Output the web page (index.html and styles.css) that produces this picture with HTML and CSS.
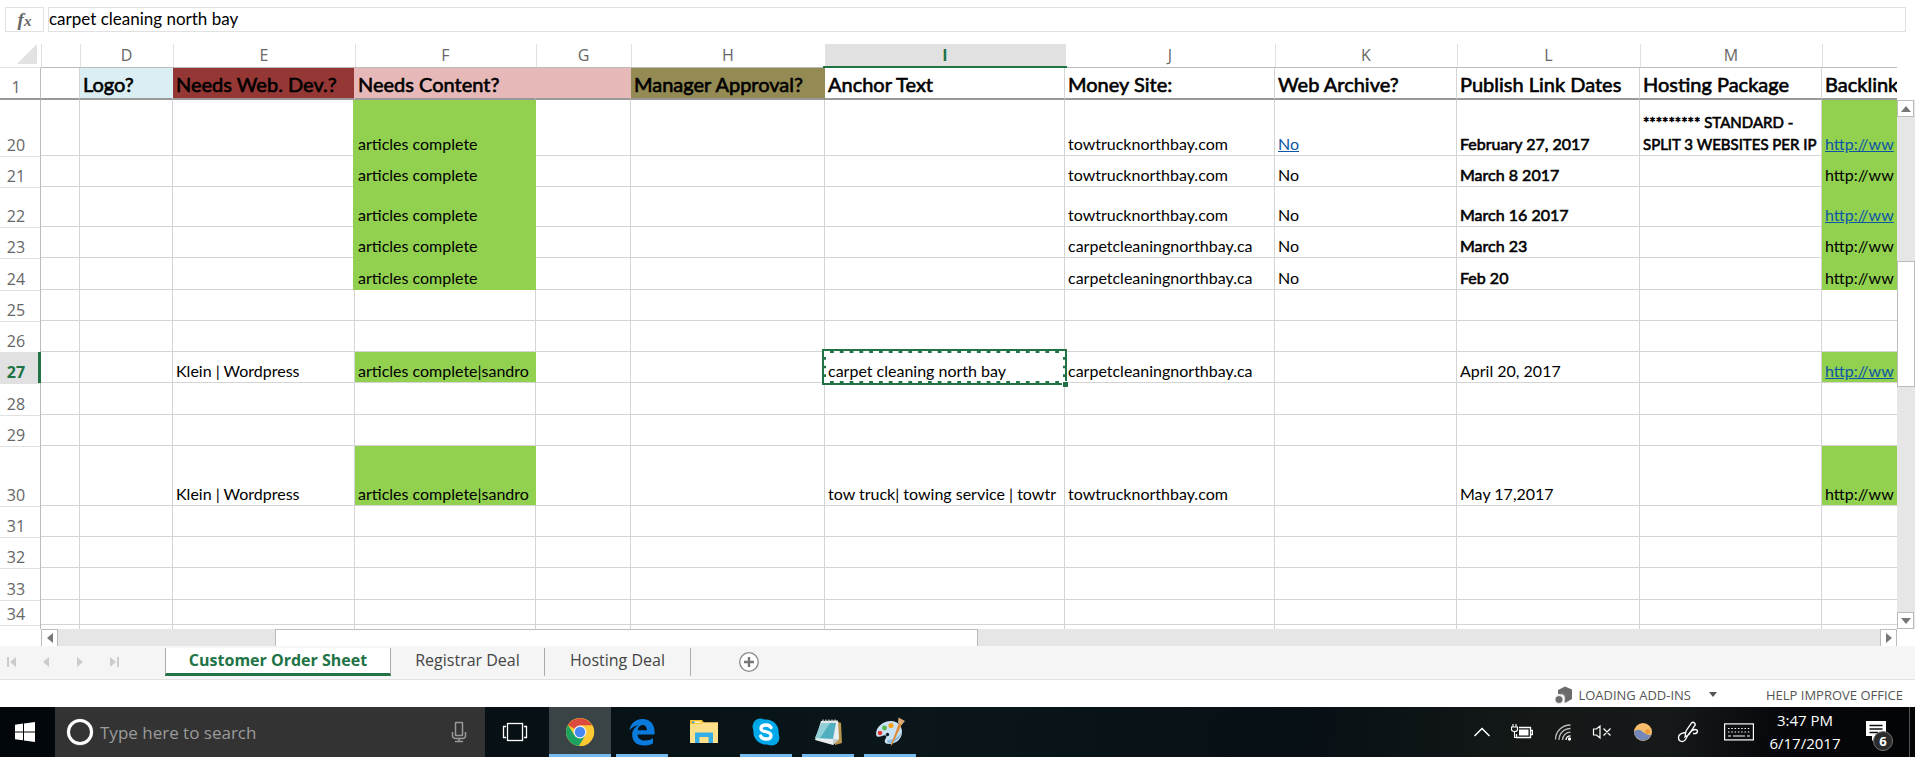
FILE: index.html
```html
<!DOCTYPE html>
<html lang="en">
<head>
<meta charset="utf-8">
<title>Customer Order Sheet</title>
<link rel="stylesheet" href="styles.css">
</head>
<body>
<div class="formula-bar">
  <button class="fx" aria-label="Insert function"><i>f</i><i class="fx-x">x</i></button>
  <input class="formula" type="text" aria-label="Formula" value="carpet cleaning north bay">
</div>

<main class="sheet">
  <div class="grid-view">
    <table class="grid">
      <colgroup>
        <col class="w-num"><col class="w-c"><col class="w-d"><col class="w-e"><col class="w-f"><col class="w-g"><col class="w-h"><col class="w-i"><col class="w-j"><col class="w-k"><col class="w-l"><col class="w-m"><col>
      </colgroup>
      <thead>
        <tr class="letters"><th class="corner"><svg width="20" height="20" viewBox="0 0 20 20"><path d="M20 0V20H0Z" fill="#e1e1e1"/></svg></th><th></th><th>D</th><th>E</th><th>F</th><th>G</th><th>H</th><th class="current">I</th><th>J</th><th>K</th><th>L</th><th>M</th><th></th></tr>
        <tr class="titles"><th class="num">1</th><td></td><td class="t-blue">Logo?</td><td class="t-red">Needs Web. Dev.?</td><td class="t-pink">Needs Content?</td><td class="t-pink"></td><td class="t-olive">Manager Approval?</td><td>Anchor Text</td><td>Money Site:</td><td>Web Archive?</td><td>Publish Link Dates</td><td>Hosting Package</td><td>Backlink</td></tr>
      </thead>
      <tbody>
        <tr class="r56"><th>20</th><td></td><td></td><td></td><td class="green solid wide">articles complete</td><td></td><td></td><td></td><td>towtrucknorthbay.com</td><td><a href="#">No</a></td><td class="bold">February 27, 2017</td><td class="bold wrap">********* STANDARD - SPLIT 3 WEBSITES PER IP</td><td class="green solid"><a href="#">http://ww</a></td></tr>
        <tr class="r31"><th>21</th><td></td><td></td><td></td><td class="green solid wide">articles complete</td><td></td><td></td><td></td><td>towtrucknorthbay.com</td><td>No</td><td class="bold">March 8 2017</td><td></td><td class="green solid">http://ww</td></tr>
        <tr class="r40"><th>22</th><td></td><td></td><td></td><td class="green solid wide">articles complete</td><td></td><td></td><td></td><td>towtrucknorthbay.com</td><td>No</td><td class="bold">March 16 2017</td><td></td><td class="green solid"><a href="#">http://ww</a></td></tr>
        <tr class="r31"><th>23</th><td></td><td></td><td></td><td class="green solid wide">articles complete</td><td></td><td></td><td></td><td>carpetcleaningnorthbay.ca</td><td>No</td><td class="bold">March 23</td><td></td><td class="green solid">http://ww</td></tr>
        <tr class="r32"><th>24</th><td></td><td></td><td></td><td class="green solid wide">articles complete</td><td></td><td></td><td></td><td>carpetcleaningnorthbay.ca</td><td>No</td><td class="bold">Feb 20</td><td></td><td class="green solid">http://ww</td></tr>
        <tr class="r31"><th>25</th><td></td><td></td><td></td><td></td><td></td><td></td><td></td><td></td><td></td><td></td><td></td><td></td></tr>
        <tr class="r31"><th>26</th><td></td><td></td><td></td><td></td><td></td><td></td><td></td><td></td><td></td><td></td><td></td><td></td></tr>
        <tr class="r31"><th class="current">27</th><td></td><td></td><td>Klein | Wordpress</td><td class="green">articles complete|sandro</td><td></td><td></td><td class="selected">carpet cleaning north bay<span class="marquee"></span><span class="handle"></span></td><td>carpetcleaningnorthbay.ca</td><td></td><td>April 20, 2017</td><td></td><td class="green"><a href="#">http://ww</a></td></tr>
        <tr class="r32"><th>28</th><td></td><td></td><td></td><td></td><td></td><td></td><td></td><td></td><td></td><td></td><td></td><td></td></tr>
        <tr class="r31"><th>29</th><td></td><td></td><td></td><td></td><td></td><td></td><td></td><td></td><td></td><td></td><td></td><td></td></tr>
        <tr class="r60"><th>30</th><td></td><td></td><td>Klein | Wordpress</td><td class="green">articles complete|sandro</td><td></td><td></td><td>tow truck| towing service | towtr</td><td>towtrucknorthbay.com</td><td></td><td>May 17,2017</td><td></td><td class="green">http://ww</td></tr>
        <tr class="r31"><th>31</th><td></td><td></td><td></td><td></td><td></td><td></td><td></td><td></td><td></td><td></td><td></td><td></td></tr>
        <tr class="r31"><th>32</th><td></td><td></td><td></td><td></td><td></td><td></td><td></td><td></td><td></td><td></td><td></td><td></td></tr>
        <tr class="r32"><th>33</th><td></td><td></td><td></td><td></td><td></td><td></td><td></td><td></td><td></td><td></td><td></td><td></td></tr>
        <tr class="r25"><th>34</th><td></td><td></td><td></td><td></td><td></td><td></td><td></td><td></td><td></td><td></td><td></td><td></td></tr>
        <tr class="last"><th></th><td></td><td></td><td></td><td></td><td></td><td></td><td></td><td></td><td></td><td></td><td></td><td></td></tr>
      </tbody>
    </table>
  </div>
  <div class="vscroll">
    <button aria-label="Scroll up"><svg width="10" height="6" viewBox="0 0 10 6"><path d="M5 0L10 6H0Z"/></svg></button>
    <div class="v-before"></div><div class="v-thumb"></div><div class="v-after"></div>
    <button aria-label="Scroll down"><svg width="10" height="6" viewBox="0 0 10 6"><path d="M0 0H10L5 6Z"/></svg></button>
  </div>
</main>
<div class="hscroll">
  <button aria-label="Scroll left"><svg width="6" height="10" viewBox="0 0 6 10"><path d="M6 0V10L0 5Z"/></svg></button>
  <div class="h-before"></div><div class="h-thumb"></div><div class="h-after"></div>
  <button aria-label="Scroll right"><svg width="6" height="10" viewBox="0 0 6 10"><path d="M0 0L6 5L0 10Z"/></svg></button>
</div>

<nav class="tabs">
  <div class="tab-nav">
    <button aria-label="First sheet"><svg width="10" height="10" viewBox="0 0 10 10"><path d="M0 0H2V10H0ZM9 0V10L3 5Z"/></svg></button>
    <button aria-label="Previous sheet"><svg width="10" height="10" viewBox="0 0 10 10"><path d="M8 0V10L2 5Z"/></svg></button>
    <button aria-label="Next sheet"><svg width="10" height="10" viewBox="0 0 10 10"><path d="M2 0L8 5L2 10Z"/></svg></button>
    <button aria-label="Last sheet"><svg width="10" height="10" viewBox="0 0 10 10"><path d="M1 0L7 5L1 10ZM8 0H10V10H8Z"/></svg></button>
  </div>
  <button class="tab active">Customer Order Sheet</button>
  <button class="tab tab-reg">Registrar Deal</button>
  <button class="tab tab-host">Hosting Deal</button>
  <button class="add" aria-label="New sheet"><svg width="22" height="22" viewBox="0 0 22 22"><circle cx="11" cy="11" r="9.3" fill="#fff" stroke="#8a8a8a" stroke-width="1.3"/><path d="M11 6V16M6 11H16" stroke="#767676" stroke-width="2.4"/></svg></button>
</nav>

<div class="status">
  <button class="loading">
    <svg width="18" height="18" viewBox="0 0 18 18"><path d="M3 4L10 0.500L17 3.500V13L10 17V11L8 8.500L3 8Z" fill="#6b6b6b"/><path d="M10 17V9L6 7" stroke="#8e8e8e" fill="none" stroke-width=".8"/><circle cx="4" cy="13.500" r="4" fill="#6b6b6b" stroke="#fff" stroke-width=".8"/></svg>
    <span>LOADING ADD-INS</span>
    <svg class="drop" width="8" height="5" viewBox="0 0 8 5"><path d="M0 0H8L4 5Z" fill="#555"/></svg>
  </button>
  <button class="improve">HELP IMPROVE OFFICE</button>
</div>

<footer class="taskbar">
  <button class="start" aria-label="Start"><svg width="20" height="20" viewBox="0 0 20 20" fill="#fff"><path d="M0 2.700L8 1.600V9.400H0ZM9 1.400L20 0V9.400H9ZM0 10.400H8V18.300L0 17.200ZM9 10.400H20V20L9 18.500Z"/></svg></button>
  <label class="search">
    <svg width="28" height="28" viewBox="0 0 28 28"><circle cx="14" cy="14" r="13.300" fill="#777"/><circle cx="14" cy="14" r="11.500" fill="#333" stroke="#fff" stroke-width="3"/></svg>
    <input type="text" aria-label="Search" placeholder="Type here to search">
    <svg width="16" height="22" viewBox="0 0 16 22" fill="none" stroke="#999" stroke-width="1.500"><rect x="4.500" y="1.500" width="7" height="13" rx=".5"/><path d="M1.500 11V14.500Q1.500 17.500 5 17.500H11Q14.500 17.500 14.500 14.500V11M8 17.500V20.500M4 20.500H12"/></svg>
  </label>
  <button class="task view" aria-label="Task view"><svg width="26" height="20" viewBox="0 0 26 20" fill="none" stroke="#fff" stroke-width="1.300"><rect x="5.500" y="1.500" width="15" height="17"/><path d="M4 4.500H1.500V15.500H4M22 4.500H24.500V15.500H22"/></svg></button>
  <button class="task open front" aria-label="Chrome"><svg width="30" height="30" viewBox="0 0 30 30"><circle cx="15" cy="15" r="14" fill="#fbc931"/><path d="M15 15L2.900 8A14 14 0 0 1 27.100 8.500H15Z" fill="#dc4b3e"/><path d="M2.900 8A14 14 0 0 0 14 29L20.600 18.200L15 20L9.500 18.200Z" fill="#1ba261"/><path d="M15 8.500H27.500A14 14 0 0 1 14 29L20.600 18.200Z" fill="#fbc931"/><circle cx="15" cy="15" r="6.500" fill="#f1f1f1"/><circle cx="15" cy="15" r="5.200" fill="#4688f1"/></svg></button>
  <button class="task open" aria-label="Edge"><svg width="28" height="28" viewBox="0 0 28 28"><path d="M1.500 12.500C2.500 5 8 1 14.500 1C22 1 26.500 6.500 26.500 13V16.500H9.500C9.800 20.500 13 22.500 17 22.500C20 22.500 22.500 21.700 25 20.300V25.500C22 27 19.500 27.500 16 27.500C9 27.500 4.200 23.500 4.200 17C4.200 12.500 6.500 9.300 10.500 7.300C6.500 7.800 3.500 9.500 1.500 12.500ZM9.700 12.300H19C19 9 17.300 6.900 14.500 6.900C12 6.900 10 9 9.700 12.300Z" fill="#0a7bdc"/></svg></button>
  <button class="task" aria-label="File Explorer"><svg width="30" height="26" viewBox="0 0 30 26"><path d="M1 1H13L15 3.500H29V24H1Z" fill="#f5c12e"/><path d="M3 2.500H12V4H3Z" fill="#fff7d5"/><path d="M3 2.500H5.500V4H3Z" fill="#27a0e0"/><path d="M1 5H12L14 3.500H29V24H1Z" fill="#ffe08a"/><path d="M6 24V13.500H24V24H19.500V18H10.500V24Z" fill="#35aee8"/></svg></button>
  <button class="task open" aria-label="Skype"><svg width="30" height="30" viewBox="0 0 30 30"><circle cx="9.500" cy="9.500" r="8" fill="#00a5e6"/><circle cx="20.500" cy="20.500" r="8" fill="#00a5e6"/><circle cx="15" cy="15" r="12.600" fill="#00a9ea"/><path d="M20 10.500C19 8.700 17.300 8 15 8C12 8 10 9.300 10 11.400C10 16 20 13.500 20 18.400C20 20.700 18 22 15 22C12.300 22 10.300 21 9.700 19" fill="none" stroke="#fff" stroke-width="3.300" stroke-linecap="round"/></svg></button>
  <button class="task open" aria-label="Notepad"><svg width="30" height="28" viewBox="0 0 30 28"><path d="M23 3L28 5L29 25L22 27Z" fill="#b8964f"/><path d="M8 3L25 2.500L26 21L20 27L2 22Z" fill="#e9eff0"/><path d="M8.500 5L23 5L20 21L2 20Z" fill="#51aebf"/><path d="M8.500 5L17 5L7 20.300L2 20Z" fill="#91d0d6"/><path d="M20 21L26 21L20 27Z" fill="#c5cfd2"/><path d="M10 1.500V5M13 1.500V5M16 1.500V5M19 1.500V5M22 1.500V5" stroke="#d8dcdc" stroke-width="1.200"/></svg></button>
  <button class="task open" aria-label="Paint"><svg width="32" height="30" viewBox="0 0 32 30"><path d="M2 17C2 10 9 4 17 4C24 4 28 9 28 15C28 22 22 27 15 27C10 27 10 23.500 12 21C13.500 18.500 11 17.500 8 19C5 20.500 2 20 2 17Z" fill="#c9e2f4"/><path d="M14 26.500C21 26 27 21 28 14C25 20 20 23 13 23Z" fill="#8ebbdc"/><circle cx="6" cy="16" r="2.300" fill="#e23b30"/><circle cx="10.500" cy="11" r="2.400" fill="#55b848"/><circle cx="17" cy="8.500" r="2.600" fill="#f4a21d"/><circle cx="13.500" cy="17.500" r="1.700" fill="#10202a"/><path d="M25 6L28 7L18 28L16.500 29Z" fill="#dc8a35"/><path d="M24.500 0.500L31 4L27.500 8L24 6Z" fill="#d9aa78"/></svg></button>
  <div class="tray">
    <button class="t-up" aria-label="Show hidden icons"><svg width="18" height="12" viewBox="0 0 18 12"><path d="M1.500 10L9 2.500L16.500 10" fill="none" stroke="#fff" stroke-width="1.500"/></svg></button>
    <button class="t-bat" aria-label="Battery"><svg width="22" height="16" viewBox="0 0 22 16"><path d="M8 3.500H19.500V13.500H5.500V10M20 6.500H21.500V10.500H20" fill="none" stroke="#fff" stroke-width="1.300"/><rect x="8" y="5.500" width="9.500" height="6" fill="#fff"/><path d="M2 0V3M5 0V3M.5 3H6.500V5.500Q6.500 7.500 3.500 7.500Q.5 7.500 .5 5.500ZM3.500 8V13.500H6" fill="none" stroke="#fff" stroke-width="1.100"/></svg></button>
    <button class="t-wifi" aria-label="Network"><svg width="18" height="18" viewBox="0 0 18 18" fill="none" stroke="#bbb" stroke-width="1.300"><path d="M1.500 16.500C1.500 8.500 8 2 16.500 2M5 17C5 10.500 10 5.500 16.500 5.500M8.500 17C8.500 12.500 12 9.200 16.500 9.200"/><path d="M12 17C12 14.500 14 12.800 16.500 12.800" stroke="#fff"/><circle cx="15.500" cy="16" r="1" fill="#fff" stroke="#fff"/></svg></button>
    <button class="t-vol" aria-label="Volume muted"><svg width="20" height="16" viewBox="0 0 20 16" fill="none" stroke="#fff" stroke-width="1.200"><path d="M1.500 5H4.500L8 2V14L4.500 11H1.500ZM11.500 4.500L18.500 11.500M18.500 4.500L11.500 11.500"/></svg></button>
    <button class="t-ball" aria-label="Night light"><svg width="18" height="18" viewBox="0 0 18 18"><circle cx="9" cy="9" r="9" fill="#f6bd6a"/><path d="M0 8.500Q5 5 9 9T17.500 11.500A9 9 0 0 1 0 8.500Z" fill="#7388b8"/><circle cx="13.500" cy="8.500" r="2.500" fill="#ee9b39"/></svg></button>
    <button class="t-pen" aria-label="Windows Ink"><svg width="22" height="22" viewBox="0 0 22 22" fill="none" stroke="#fff" stroke-width="1.300"><path d="M8 16L9 10L14.500 2Q16 .500 17.500 2T17.500 5L12 13.500ZM8.500 11.500Q1.500 12.500 1.500 16.500T5.500 20.500C9 20.500 9.500 15 12.500 12Q15.500 8.500 18 8.500T20.500 10.500Q20 13 16 12.500"/></svg></button>
    <button class="t-key" aria-label="Touch keyboard"><svg width="30" height="18" viewBox="0 0 30 18" fill="none" stroke="#fff" stroke-width="1.200"><rect x=".6" y=".9" width="28.800" height="16"/><path d="M4 5.500H26M4 9H26" stroke-dasharray="1.500 1.800"/><path d="M4 13H7M9 13H21M23 13H26"/></svg></button>
    <button class="clock"><span>3:47 PM</span><span>6/17/2017</span></button>
    <button class="notes" aria-label="Notifications"><svg width="22" height="22" viewBox="0 0 22 22"><path d="M1 1H21V16H12L7 21V16H1Z" fill="#fff"/><path d="M4.500 5.500H17.500M4.500 9H17.500M4.500 12.500H13" stroke="#111" stroke-width="1.300"/></svg><span class="badge">6</span></button>
  </div>
</footer>
</body>
</html>
```
FILE: styles.css
```css
* { box-sizing: border-box; }

body {
  margin: 0;
  min-height: 100vh;
  display: flex;
  flex-direction: column;
  background: #fff;
  color: #000;
  font-family: "Open Sans", "Noto Sans", sans-serif;
  overflow: hidden;
}

button {
  border: 0;
  padding: 0;
  margin: 0;
  background: none;
  font: inherit;
  color: inherit;
  display: flex;
  align-items: center;
  justify-content: center;
}

input { border: 0; outline: 0; min-width: 0; }
svg { display: block; flex: none; }

/* Formula bar */
.formula-bar {
  display: flex;
  gap: 4px;
  padding: 7px 9px 12px 5px;
}
.fx {
  width: 39px;
  height: 25px;
  border: 1px solid #e1e1e1;
  font-family: "Liberation Serif", serif;
  font-size: 19px;
  font-weight: 700;
  line-height: 20px;
  color: #666;
}
.fx-x { font-size: 15px; align-self: flex-end; line-height: 20px; }
.formula {
  flex: 1;
  height: 25px;
  border: 1px solid #e1e1e1;
  padding: 0 0 2px 0;
  font-family: Lato, sans-serif;
  font-size: 17px;
  color: #000;
}

/* Spreadsheet grid */
.sheet { display: flex; }
.grid-view { flex: 1; min-width: 0; overflow: hidden; }
.grid {
  width: 100%;
  table-layout: fixed;
  border-collapse: separate;
  border-spacing: 0;
}
.w-num { width: 41px; }
.w-c { width: 39px; }
.w-d { width: 93px; }
.w-e { width: 182px; }
.w-f { width: 181px; }
.w-g { width: 95px; }
.w-h { width: 194px; }
.w-i { width: 240px; }
.w-j { width: 210px; }
.w-k { width: 182px; }
.w-l { width: 183px; }
.w-m { width: 182px; }

.grid th {
  padding: 0;
  vertical-align: bottom;
  font-size: 16px;
  font-weight: 400;
  line-height: 22px;
  color: #666;
}
.grid td {
  padding: 0 0 0 3px;
  vertical-align: bottom;
  overflow: hidden;
  white-space: nowrap;
  border-right: 1px solid #d4d4d4;
  border-bottom: 1px solid #d4d4d4;
  font-family: Lato, sans-serif;
  font-size: 16px;
  line-height: 22px;
}
.grid td:last-child { border-right: 0; }

.letters { height: 24px; }
.letters th {
  border-bottom: 1px solid #bbb;
  padding-bottom: 1px;
  box-shadow: 1px 0 #e1e1e1;
}
.letters th:last-child { box-shadow: none; }
.letters .corner { border-right: 0; padding-right: 4px; padding-bottom: 3px; border-bottom-color: #e1e1e1; }
.corner svg { margin-left: auto; }
.letters .current {
  position: relative;
  background: #e1e1e1;
  color: #217346;
  font-weight: 700;
  border-bottom-color: #217346;
}
.letters .current::after {
  content: "";
  position: absolute;
  left: -2px;
  right: -2px;
  bottom: -1px;
  height: 2px;
  background: #217346;
}

tbody th, .titles th { text-align: center; }
.grid tbody th, .grid .num {
  padding-right: 8px;
  border-right: 1px solid #bbb;
  box-shadow: 0 1px #e1e1e1;
}
.grid .num { box-shadow: none; border-bottom: 2px solid #999; }
.grid tbody .current {
  background: #e1e1e1;
  color: #217346;
  font-weight: 700;
  padding-right: 6px;
  border-right: 3px solid #217346;
}

.titles { height: 32px; }
.grid .titles td {
  border-bottom: 2px solid #999;
  font-size: 20px;
  line-height: 28px;
}
.grid .titles td, .grid .bold { -webkit-text-stroke: 0.6px #000; }
.grid .titles .t-blue { background: #daeef3; border-right-color: #daeef3; }
.grid .titles .t-red { background: #953735; border-right-color: #e6b9b8; }
.grid .titles .t-pink { background: #e6b9b8; border-right-color: #e6b9b8; }
.grid .titles .t-olive { background: #948a54; border-right-color: #948a54; }

.r25 { height: 25px; }
.r31 { height: 31px; }
.r32 { height: 32px; }
.r40 { height: 40px; }
.r56 { height: 56px; }
.r60 { height: 60px; }
.last { height: 4px; }
.grid .last th, .grid .last td { border-bottom: 0; box-shadow: none; line-height: 1px; }

.grid .green { background: #92d050; border-right-color: #92d050; }
.grid .solid { border-bottom-color: #92d050; }
.grid .wide { box-shadow: -2px 0 #92d050; }
.grid .wrap { white-space: normal; font-size: 15px; }
.grid a { color: #0b55a5; text-decoration: underline; }

.grid .selected { position: relative; overflow: visible; }
.marquee {
  position: absolute;
  inset: -3px;
  border: 4px solid #217346;
}
.marquee::after {
  content: "";
  position: absolute;
  inset: -2px;
  border: 2px dashed #fff;
}
.handle {
  position: absolute;
  right: -4px;
  bottom: -5px;
  width: 6px;
  height: 6px;
  background: #217346;
  border: 1px solid #fff;
  border-width: 1px 0 0 1px;
}

/* Scroll bars */
.vscroll {
  width: 18px;
  margin-top: 56px;
  display: flex;
  flex-direction: column;
  background: #e6e6e6;
}
.vscroll button, .hscroll button {
  width: 17px;
  height: 17px;
  flex: none;
  background: #fff;
  border: 1px solid #bbb;
}
.vscroll svg, .hscroll svg { fill: #777; }
.v-before { flex: 145; }
.v-thumb { flex: 125; width: 18px; background: #fff; border: 1px solid #bbb; }
.v-after { flex: 226; }
.hscroll {
  display: flex;
  height: 17px;
  margin: 0 18px 0 41px;
  background: #e6e6e6;
}
.h-before { flex: 217; }
.h-thumb { flex: 703; background: #fff; border: 1px solid #bbb; border-bottom: 0; }
.h-after { flex: 903; }
.hscroll button { border-bottom: 0; }

/* Sheet tabs */
.tabs {
  display: flex;
  height: 34px;
  padding-top: 2px;
  background: #f5f5f5;
  border-bottom: 1px solid #e1e1e1;
  font-size: 16px;
  color: #444;
}
.tab-nav { width: 165px; height: 27px; display: flex; align-items: center; gap: 24px; padding-left: 7px; }
.tab-nav svg { fill: #ccc; }
.tab { height: 28px; padding-bottom: 4px; border-right: 1px solid #ababab; }
.tab.active {
  width: 226px;
  background: #fff;
  border-left: 1px solid #ababab;
  border-bottom: 3px solid #217346;
  padding-bottom: 1px;
  color: #217346;
  font-weight: 700;
}
.tab-reg { width: 154px; }
.tab-host { width: 146px; }
.add { height: 28px; margin-left: 47px; }

/* Status bar */
.status {
  display: flex;
  justify-content: flex-end;
  align-items: center;
  height: 27px;
  padding: 2px 12px 0 0;
  font-size: 13px;
  line-height: 20px;
  color: #555;
}
.loading { gap: 5px; }
.drop { margin-left: 13px; }
.improve { margin-left: 49px; }

/* Task bar */
.taskbar {
  display: flex;
  height: 50px;
  background: linear-gradient(100deg, #02060a 0%, #061015 25%, #0a1619 48%, #071015 68%, #141817 80%, #16191a 87%, #05070a 93%, #030406 100%);
  color: #fff;
}
.start { width: 55px; padding-right: 5px; }
.search {
  width: 430px;
  display: flex;
  align-items: center;
  padding: 0 18px 0 11px;
  background: #333;
}
.search input {
  flex: 1;
  padding: 0 0 0 6px;
  background: none;
  font-family: inherit;
  font-size: 17px;
  color: #fff;
}
.search input::placeholder { color: #9b9b9b; opacity: 1; }
.task { width: 62px; position: relative; }
.task.view { width: 64px; padding-right: 4px; }
.task.front { background: #3a4447; }
.task.open::after {
  content: "";
  position: absolute;
  left: 5px;
  right: 5px;
  bottom: 0;
  height: 3px;
  background: #76b9ed;
}
.task.front::after { left: 0; right: 0; }
.tray { display: flex; margin-left: auto; padding-right: 5px; }
.t-up { width: 38px; }
.t-bat { width: 42px; }
.t-wifi { width: 40px; }
.t-vol { width: 38px; }
.t-ball { width: 44px; }
.t-pen { width: 46px; }
.t-key { width: 56px; }
.clock {
  width: 76px;
  flex-direction: column;
  font-size: 15px;
  line-height: 23px;
}
.notes { width: 67px; position: relative; border-right: 1px solid #555; padding-bottom: 2px; }
.badge {
  position: absolute;
  left: 30px;
  top: 24px;
  width: 20px;
  height: 20px;
  border-radius: 50%;
  border: 1px solid #777;
  background: #2c2c2c;
  font-size: 13px;
  font-weight: 700;
  line-height: 18px;
  text-align: center;
}
```
